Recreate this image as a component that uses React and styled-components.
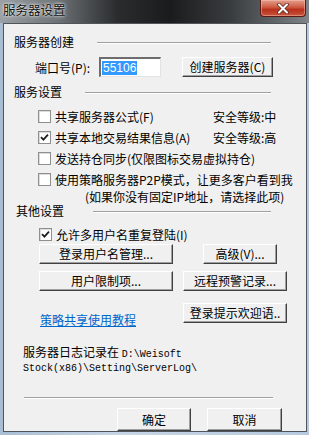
import styled, { createGlobalStyle } from "styled-components";

const Global = createGlobalStyle`
  html, body { margin: 0; padding: 0; background: #fff; }
  * { box-sizing: border-box; }
`;

const cn = `"Noto Sans CJK SC", "DejaVu Sans", sans-serif`;

const Frame = styled.div`
  width: 309px;
  height: 435px;
  overflow: hidden;
  display: flex;
  flex-direction: column;
  background: linear-gradient(90deg, #a9bdd3 0%, #c7d6e6 40%, #b6c9de 100%);
  font-family: ${cn};
  font-size: 12px;
  color: #000;
`;

const TitleBar = styled.div`
  height: 23px;
  flex: 0 0 23px;
  display: flex;
  align-items: flex-start;
  padding-right: 3px;
  background: linear-gradient(90deg, #9aa0a5 0%, #6f7478 18%, #2a2c2e 38%, #1a1b1c 55%, #3a3d40 75%, #7e8489 100%);
`;

const Title = styled.div`
  padding: 2px 0 0 3px;
  font-size: 12.5px;
  line-height: 16px;
  color: #111;
  text-shadow: 0 0 4px rgba(255,255,255,0.9), 0 0 2px rgba(255,255,255,0.9);
`;

const CloseButton = styled.div`
  margin-left: auto;
  width: 46px;
  height: 17px;
  display: flex;
  align-items: center;
  justify-content: center;
  border: 1px solid #5a1a12;
  border-top: none;
  border-radius: 0 0 4px 4px;
  background: linear-gradient(180deg, #e4a08e 0%, #cf5a43 45%, #b8301b 60%, #c9553c 100%);
  box-shadow: inset 0 0 0 1px rgba(255,200,190,0.45);
`;

const ClientRow = styled.div`
  flex: 1;
  display: flex;
  padding: 0 2px 3px 3px;
`;

const Client = styled.div`
  flex: 1;
  display: flex;
  flex-direction: column;
  background: #f0f0f0;
  border: 1px solid #4f555b;
`;

const Heading = styled.div`
  display: flex;
  align-items: center;
  height: 14px;
  margin-top: ${p => p.$top}px;
  padding-left: ${p => p.$left}px;
  padding-right: 35px;
  line-height: 14px;
  span { white-space: nowrap; }
  &::after {
    content: "";
    flex: 1;
    height: 1px;
    margin-left: ${p => p.$gap}px;
    background: #a0a0a0;
    box-shadow: 0 1px 0 #fff;
  }
`;

const PortRow = styled.div`
  display: flex;
  align-items: center;
  height: 20px;
  margin-top: 8px;
  padding-left: 31px;
`;

const PortLabel = styled.span`
  width: 64px;
  white-space: nowrap;
`;

const Input = styled.div`
  width: 62px;
  height: 20px;
  background: #fff;
  border-top: 2px solid #6d6d6d;
  border-left: 2px solid #6d6d6d;
  border-right: 1px solid #e3e3e3;
  border-bottom: 1px solid #e3e3e3;
  padding: 1px 1px;
  display: flex;
  align-items: center;
  span {
    background: #3399ff;
    color: #fff;
    font-family: "Liberation Sans", Arial, sans-serif;
    font-size: 12px;
    line-height: 14px;
    padding: 0 1px;
  }
`;

const Button = styled.div`
  width: ${p => p.$w}px;
  height: ${p => p.$h || 20}px;
  margin-left: ${p => p.$ml || 0}px;
  display: flex;
  align-items: center;
  justify-content: center;
  white-space: nowrap;
  background: #f0f0f0;
  border-top: 1px solid #fff;
  border-left: 1px solid #fff;
  border-right: 1px solid #404040;
  border-bottom: 1px solid #404040;
  box-shadow: inset -1px -1px 0 #a0a0a0;
  line-height: 14px;
`;

const CheckRow = styled.div`
  display: flex;
  align-items: center;
  height: ${p => p.$h || 21}px;
  margin-top: ${p => p.$top || 0}px;
  padding-left: ${p => p.$left || 34}px;
  white-space: nowrap;
`;

const Box = styled.div`
  width: 13px;
  height: 13px;
  flex: 0 0 13px;
  background: #fff;
  border: 1px solid #8e8f8f;
  box-shadow: inset 1px 1px 0 #dcdcdc;
  display: flex;
  align-items: center;
  justify-content: center;
  margin-right: 4px;
`;

const CheckText = styled.span`
  width: ${p => (p.$w ? `${p.$w}px` : "auto")};
`;

const Note = styled.div`
  height: 14px;
  line-height: 14px;
  padding-left: 81px;
  white-space: nowrap;
`;

const ButtonRow = styled.div`
  display: flex;
  align-items: center;
  margin-top: ${p => p.$top}px;
  padding-left: ${p => p.$left || 35}px;
`;

const LinkRow = styled.div`
  display: flex;
  height: 20px;
  margin-top: 12px;
  padding-left: 36px;
`;

const Link = styled.a`
  align-self: flex-end;
  margin-bottom: -4px;
  color: #0066cc;
  text-decoration: underline;
  line-height: 14px;
  cursor: pointer;
`;

const Log = styled.div`
  margin-top: 23px;
  padding-left: 19px;
  line-height: 11px;
  white-space: nowrap;
`;

const Mono = styled.span`
  font-family: "Liberation Mono", "DejaVu Sans Mono", monospace;
  font-size: 10px;
`;

const Separator = styled.div`
  margin: 23px 0 0 20px;
  width: 249px;
  height: 1px;
  background: #a0a0a0;
  box-shadow: 0 1px 0 #fff;
`;

const Footer = styled.div`
  display: flex;
  margin-top: 10px;
  padding-left: 113px;
  gap: 16px;
`;

const Check = () => (
  <svg width="9" height="9" viewBox="0 0 9 9">
    <path d="M1 4.2 L3.4 6.6 L8 1.6" fill="none" stroke="#1f1f1f" strokeWidth="1.8" />
  </svg>
);

const CloseX = () => (
  <svg width="12" height="11" viewBox="0 0 12 11">
    <path d="M2 1.5 L10 9.5 M10 1.5 L2 9.5" stroke="#5a2a22" strokeWidth="3.6" strokeLinecap="round" />
    <path d="M2 1.5 L10 9.5 M10 1.5 L2 9.5" stroke="#fff" strokeWidth="2" strokeLinecap="round" />
  </svg>
);

const CheckItem = ({ checked, children, w, extra, ...rest }) => (
  <CheckRow {...rest}>
    <Box>{checked && <Check />}</Box>
    <CheckText $w={w}>{children}</CheckText>
    {extra && <span>{extra}</span>}
  </CheckRow>
);

export default function App() {
  return (
    <>
      <Global />
      <Frame>
        <TitleBar>
          <Title>服务器设置</Title>
          <CloseButton><CloseX /></CloseButton>
        </TitleBar>
        <ClientRow>
          <Client>
            <Heading $top={11} $left={10} $gap={23}><span>服务器创建</span></Heading>
            <PortRow>
              <PortLabel>端口号(P):</PortLabel>
              <Input><span>55106</span></Input>
              <Button $w={91} $ml={21}>创建服务器(C)</Button>
            </PortRow>
            <Heading $top={8} $left={10} $gap={23}><span>服务设置</span></Heading>
            <CheckItem $top={7} w={158} extra="安全等级:中">共享服务器公式(F)</CheckItem>
            <CheckItem checked w={158} extra="安全等级:高">共享本地交易结果信息(A)</CheckItem>
            <CheckItem>发送持仓同步(仅限图标交易虚拟持仓)</CheckItem>
            <CheckItem>使用策略服务器P2P模式，让更多客户看到我</CheckItem>
            <Note>(如果你没有固定IP地址，请选择此项)</Note>
            <Heading $top={0} $left={12} $gap={29}><span>其他设置</span></Heading>
            <CheckItem checked $top={7} $h={18} $left={35}>允许多用户名重复登陆(I)</CheckItem>
            <ButtonRow $top={1}>
              <Button $w={134}>登录用户名管理...</Button>
              <Button $w={74} $ml={30}>高级(V)...</Button>
            </ButtonRow>
            <ButtonRow $top={7}>
              <Button $w={134}>用户限制项...</Button>
              <Button $w={104} $ml={10}>远程预警记录...</Button>
            </ButtonRow>
            <LinkRow>
              <Link>策略共享使用教程</Link>
              <Button $w={104} $ml={47}>登录提示欢迎语..</Button>
            </LinkRow>
            <Log>
              服务器日志记录在 <Mono>D:\Weisoft</Mono>
              <br />
              <Mono>Stock(x86)\Setting\ServerLog\</Mono>
            </Log>
            <Separator />
            <Footer>
              <Button $w={74} $h={23}>确定</Button>
              <Button $w={75} $h={23}>取消</Button>
            </Footer>
          </Client>
        </ClientRow>
      </Frame>
    </>
  );
}
